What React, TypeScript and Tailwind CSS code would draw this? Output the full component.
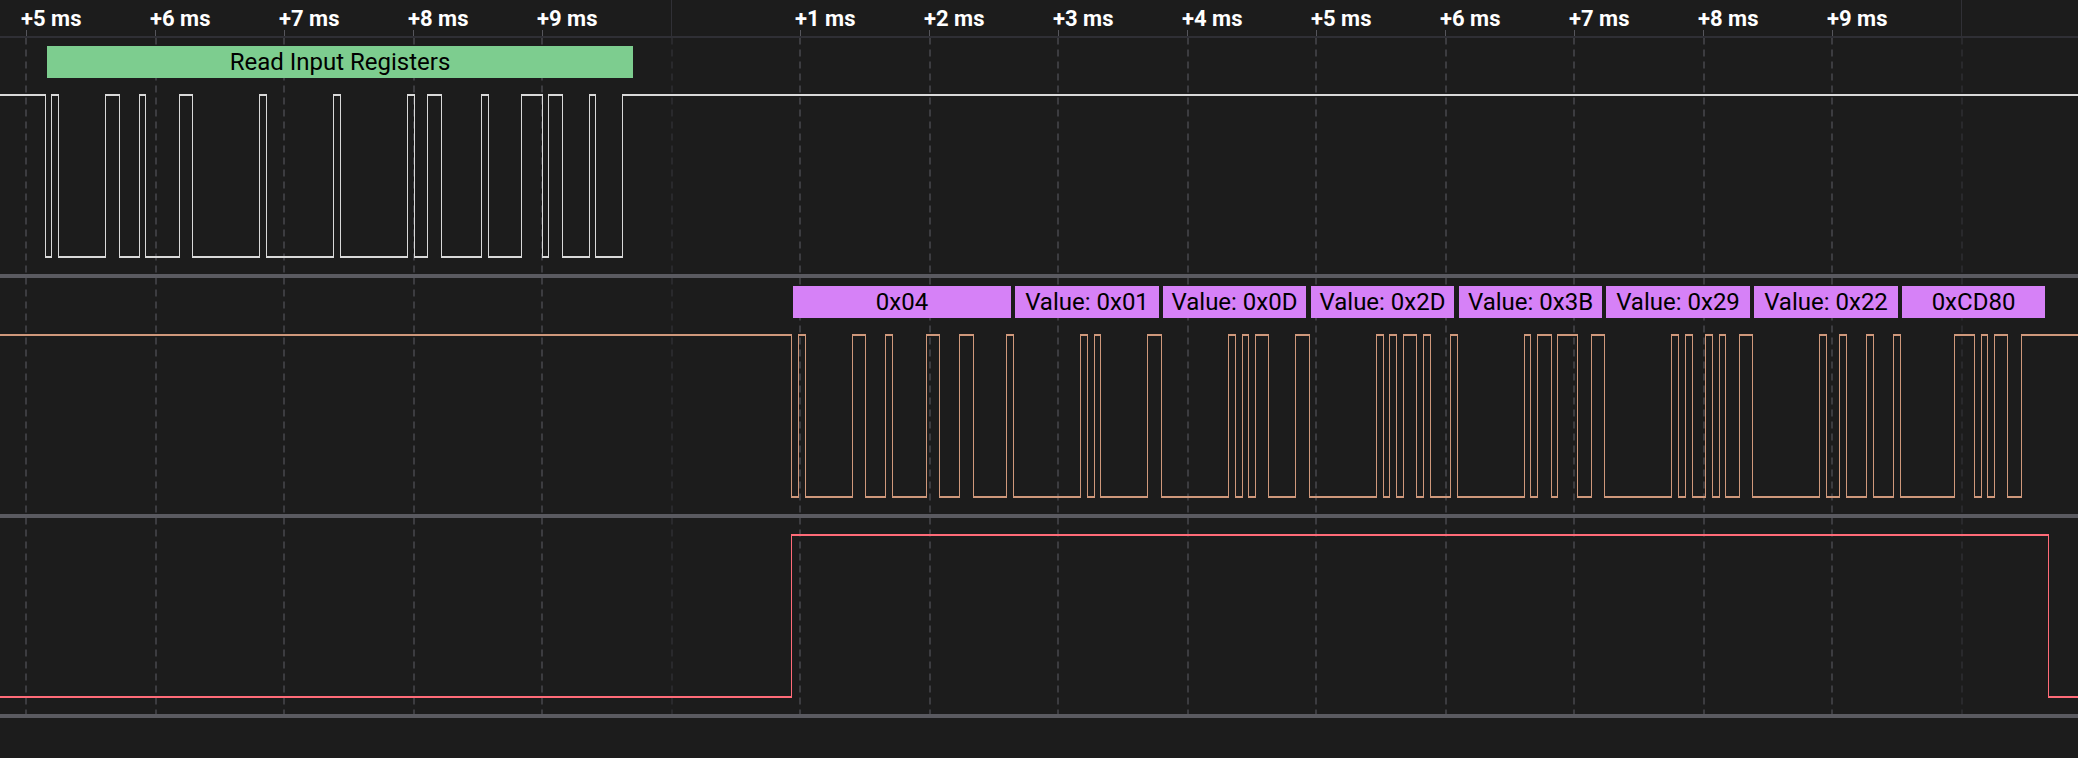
const TICKS = [
  { x: 26, label: '+5 ms' },
  { x: 155, label: '+6 ms' },
  { x: 284, label: '+7 ms' },
  { x: 413, label: '+8 ms' },
  { x: 542, label: '+9 ms' },
  { x: 671, label: '' },
  { x: 800, label: '+1 ms' },
  { x: 929, label: '+2 ms' },
  { x: 1058, label: '+3 ms' },
  { x: 1187, label: '+4 ms' },
  { x: 1316, label: '+5 ms' },
  { x: 1445, label: '+6 ms' },
  { x: 1574, label: '+7 ms' },
  { x: 1703, label: '+8 ms' },
  { x: 1832, label: '+9 ms' },
  { x: 1961, label: '' },
];

const GRID = [25, 155, 283, 413, 541, 671, 799, 929, 1057, 1187, 1315, 1445, 1573, 1703, 1831, 1961];
const MAJOR = [671, 1961];

const TX_EDGES = [
  45, 51, 58, 105, 119, 139, 145, 179, 192, 259, 266, 333, 340, 407, 414, 427, 441, 481, 488, 521, 542, 548, 562, 589,
  595, 622,
];

const RX_EDGES = [
  791, 798, 805, 852, 865, 885, 892, 926, 939, 959, 973, 1006, 1013, 1080, 1087, 1094, 1100, 1147, 1161, 1228, 1235,
  1242, 1248, 1255, 1268, 1295, 1309, 1376, 1383, 1389, 1396, 1403, 1416, 1423, 1430, 1450, 1457, 1524, 1530, 1537,
  1551, 1557, 1577, 1591, 1604, 1671, 1678, 1685, 1692, 1705, 1712, 1719, 1725, 1739, 1752, 1819, 1826, 1839, 1846,
  1866, 1873, 1893, 1900, 1954, 1974, 1981, 1987, 1994, 2007, 2021,
];

const ENABLE_EDGES = [791, 2048];

type Frame = { start: number; end: number; label: string };

const TX_FRAMES: Frame[] = [{ start: 47, end: 633, label: 'Read Input Registers' }];

const RX_FRAMES: Frame[] = [
  { start: 793, end: 1011, label: '0x04' },
  { start: 1015, end: 1159, label: 'Value: 0x01' },
  { start: 1163, end: 1306, label: 'Value: 0x0D' },
  { start: 1311, end: 1454, label: 'Value: 0x2D' },
  { start: 1459, end: 1602, label: 'Value: 0x3B' },
  { start: 1606, end: 1750, label: 'Value: 0x29' },
  { start: 1754, end: 1898, label: 'Value: 0x22' },
  { start: 1902, end: 2045, label: '0xCD80' },
];

const WIDTH = 2078;

/** Digital trace: 2px levels joined by 1px edges. */
function Trace({ edges, startHigh, color }: { edges: number[]; startHigh: boolean; color: string }) {
  const stops = [0, ...edges, WIDTH];
  return (
    <svg className="block w-full" height={164} viewBox={`0 0 ${WIDTH} 164`} shapeRendering="crispEdges" fill={color}>
      {stops.slice(0, -1).map((x, i) => (
        <rect
          key={`level-${x}`}
          x={x}
          y={(i % 2 === 0) === startHigh ? 0 : 162}
          width={stops[i + 1] - x + 1}
          height={2}
        />
      ))}
      {edges.map((x) => (
        <rect key={`edge-${x}`} x={x} y={0} width={1} height={164} />
      ))}
    </svg>
  );
}

function GridLines({ height }: { height: number }) {
  return (
    <svg className="absolute inset-0" width={WIDTH} height={height}>
      {GRID.map((x) => (
        <line
          key={x}
          x1={x + 1}
          x2={x + 1}
          y1={0}
          y2={height}
          strokeWidth={2}
          stroke={MAJOR.includes(x) ? '#29292c' : '#3c3c40'}
          strokeDasharray="7 5"
          strokeDashoffset={0.5}
        />
      ))}
    </svg>
  );
}

function Frames({ frames, color }: { frames: Frame[]; color: string }) {
  return (
    <div className="flex h-8">
      {frames.map((f, i) => (
        <div
          key={f.start}
          className={`${color} h-8 shrink-0 whitespace-nowrap text-center text-2xl leading-8 text-black`}
          style={{ width: f.end - f.start, marginLeft: f.start - (i ? frames[i - 1].end : 0) }}
        >
          {f.label}
        </div>
      ))}
    </div>
  );
}

export default function App() {
  return (
    <div className="flex h-[758px] w-[2078px] flex-col overflow-hidden bg-[#1c1c1c] font-[Roboto,sans-serif]">
      <header className="relative h-[38px] shrink-0 border-b-2 border-[#2f2f35]">
        {TICKS.map((t) => (
          <div key={t.x} className="absolute top-0 h-9" style={{ left: t.x }}>
            {t.label ? (
              <>
                <span className="absolute -left-[5px] top-[7px] whitespace-nowrap text-[22px] font-bold leading-6 text-white">
                  {t.label}
                </span>
                <i className="absolute top-[30px] h-[6px] w-px bg-[#56565c]" />
              </>
            ) : (
              <i className="absolute top-0 h-9 w-px bg-[#303036]" />
            )}
          </div>
        ))}
      </header>
      <section className="relative h-60 shrink-0 border-b-4 border-[#5a5a60] pt-2">
        <GridLines height={236} />
        <div className="relative flex flex-col gap-4">
          <Frames frames={TX_FRAMES} color="bg-[#7dcd8f]" />
          <Trace edges={TX_EDGES} startHigh color="#d9d9d9" />
        </div>
      </section>
      <section className="relative h-60 shrink-0 border-b-4 border-[#5a5a60] pt-2">
        <GridLines height={236} />
        <div className="relative flex flex-col gap-4">
          <Frames frames={RX_FRAMES} color="bg-[#d681f7]" />
          <Trace edges={RX_EDGES} startHigh color="#cf987b" />
        </div>
      </section>
      <section className="relative h-50 shrink-0 border-b-4 border-[#5a5a60] pt-4">
        <GridLines height={196} />
        <div className="relative">
          <Trace edges={ENABLE_EDGES} startHigh={false} color="#ff6b78" />
        </div>
      </section>
    </div>
  );
}
